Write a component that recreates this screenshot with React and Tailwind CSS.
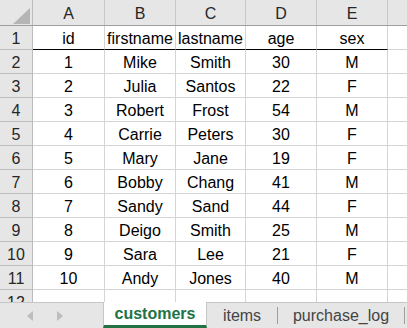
import React from 'react';

const cols = ['A', 'B', 'C', 'D', 'E'];
const widths = ['w-[72px]', 'w-[71px]', 'w-[70px]', 'w-[71px]', 'w-[71px]'];

const rows = [
    ['id', 'firstname', 'lastname', 'age', 'sex'],
    ['1', 'Mike', 'Smith', '30', 'M'],
    ['2', 'Julia', 'Santos', '22', 'F'],
    ['3', 'Robert', 'Frost', '54', 'M'],
    ['4', 'Carrie', 'Peters', '30', 'F'],
    ['5', 'Mary', 'Jane', '19', 'F'],
    ['6', 'Bobby', 'Chang', '41', 'M'],
    ['7', 'Sandy', 'Sand', '44', 'F'],
    ['8', 'Deigo', 'Smith', '25', 'M'],
    ['9', 'Sara', 'Lee', '21', 'F'],
    ['10', 'Andy', 'Jones', '40', 'M'],
    ['', '', '', '', ''],
];

const App = () => {
    return (
        <div className="w-[407px] h-[328px] overflow-hidden bg-white flex flex-col text-[16px] text-black" style={{ fontFamily: '"Liberation Sans", Arial, sans-serif' }}>
            {/* Grid */}
            <div className="h-[302px] overflow-hidden flex-none">
                {/* Column headers */}
                <div className="flex h-[26px] bg-[#e6e6e6] border-b border-[#9e9e9e]">
                    <div className="w-[33px] flex-none border-r border-[#bcbcbc] relative">
                        <svg className="absolute left-[13px] top-[8px]" width="17" height="16" viewBox="0 0 17 16">
                            <polygon points="17,0 17,16 0,16" fill="#b5b5b5" />
                        </svg>
                    </div>
                    {cols.map((c, i) => (
                        <div key={c} className={`${widths[i]} flex-none border-r border-[#c8c8c8] flex items-center justify-center pt-[2px] text-[#262626]`}>
                            {c}
                        </div>
                    ))}
                    <div className="flex-1" />
                </div>

                {/* Rows */}
                {rows.map((r, ri) => (
                    <div key={ri} className="flex h-[24px]">
                        <div className="w-[33px] flex-none bg-[#e6e6e6] border-r border-b border-[#bcbcbc] flex items-center justify-center pt-[3px] text-[#262626]">
                            {ri + 1}
                        </div>
                        {r.map((v, ci) => (
                            <div
                                key={ci}
                                className={`${widths[ci]} flex-none border-r border-[#d4d4d4] border-b flex items-center justify-center pt-[3px] whitespace-nowrap ${ri === 0 ? 'border-b-black' : 'border-b-[#d4d4d4]'}`}
                            >
                                {v}
                            </div>
                        ))}
                        <div className="flex-1 border-b border-[#d4d4d4]" />
                    </div>
                ))}
            </div>

            {/* Sheet tabs */}
            <div className="flex h-[26px] bg-[#e6e6e6] border-t border-[#c6c6c6] items-stretch">
                <div className="w-[103px] flex-none flex items-center">
                    <svg className="ml-[27px]" width="6" height="10" viewBox="0 0 6 10">
                        <polygon points="6,0 6,10 0,5" fill="#bdbdbd" />
                    </svg>
                    <svg className="ml-[24px]" width="6" height="10" viewBox="0 0 6 10">
                        <polygon points="0,0 0,10 6,5" fill="#bdbdbd" />
                    </svg>
                </div>
                <div className="w-[104px] flex-none bg-white border-l border-r border-[#c6c6c6] -mt-px border-b-[3px] border-b-[#217346] flex items-center justify-center font-bold text-[#217346]">
                    customers
                </div>
                <div className="w-[70px] flex-none flex items-center justify-center text-[#444444]">
                    items
                </div>
                <div className="w-px h-[17px] self-center bg-[#9e9e9e]" />
                <div className="w-[126px] flex-none flex items-center justify-center text-[#444444]">
                    purchase_log
                </div>
                <div className="w-px h-[17px] self-center bg-[#9e9e9e]" />
            </div>
        </div>
    );
};

export default App;
